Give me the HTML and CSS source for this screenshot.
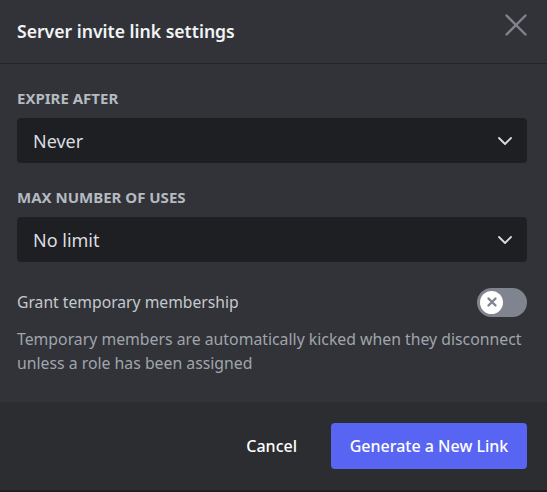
FILE: index.html
```html
<!DOCTYPE html>
<html>
<head>
<meta charset="utf-8">
<link rel="stylesheet" href="styles.css">
</head>
<body>
<div class="modal">
  <header class="modal-header">
    <h1 class="title">Server invite link settings</h1>
    <button class="close" aria-label="Close">
      <svg width="24" height="24" viewBox="0 0 24 24"><path d="M2.5 2.5 L21.5 21.5 M21.5 2.5 L2.5 21.5" stroke="currentColor" stroke-width="2.4" fill="none" stroke-linecap="round"/></svg>
    </button>
  </header>
  <div class="modal-body">
    <div class="field">
      <div class="label">Expire After</div>
      <div class="select">
        <span>Never</span>
        <svg class="chev" width="16" height="16" viewBox="0 0 16 16"><path d="M2 5 L8 11 L14 5" stroke="currentColor" stroke-width="1.8" fill="none" stroke-linecap="round" stroke-linejoin="round"/></svg>
      </div>
    </div>
    <div class="field">
      <div class="label">Max Number of Uses</div>
      <div class="select">
        <span>No limit</span>
        <svg class="chev" width="16" height="16" viewBox="0 0 16 16"><path d="M2 5 L8 11 L14 5" stroke="currentColor" stroke-width="1.8" fill="none" stroke-linecap="round" stroke-linejoin="round"/></svg>
      </div>
    </div>
    <div class="toggle-row">
      <span class="toggle-label">Grant temporary membership</span>
      <div class="toggle">
        <div class="knob">
          <svg width="12" height="12" viewBox="0 0 12 12"><path d="M2.5 2.5 L9.5 9.5 M9.5 2.5 L2.5 9.5" stroke="currentColor" stroke-width="2.4" stroke-linecap="round"/></svg>
        </div>
      </div>
    </div>
    <p class="desc">Temporary members are automatically kicked when they disconnect unless a role has been assigned</p>
  </div>
  <footer class="modal-footer">
    <button class="btn-cancel">Cancel</button>
    <button class="btn-primary">Generate a New Link</button>
  </footer>
</div>
</body>
</html>
```
FILE: styles.css
```css
* { box-sizing: border-box; }
html, body { margin: 0; padding: 0; background: #313338; }
body { font-family: "Noto Sans", "Open Sans", sans-serif; }
.modal {
  width: 547px;
  height: 492px;
  background: #313338;
  display: flex;
  flex-direction: column;
  border-bottom: 2px solid #1e1f22;
}
.modal-header {
  height: 64px;
  flex: none;
  display: flex;
  align-items: center;
  justify-content: space-between;
  padding: 0 17px 2px 17px;
  border-bottom: 1px solid #232428;
}
.title {
  margin: 0;
  font-size: 17.6px;
  font-weight: 600;
  color: #f2f3f5;
}
.close {
  background: none;
  border: 0;
  padding: 0;
  color: #80848e;
  width: 24px;
  height: 24px;
  margin-top: -11px;
  margin-right: 2px;
}
.close svg { display: block; }
.modal-body {
  flex: 1;
  padding: 25px 20px 0 17px;
}
.field { margin-bottom: 25px; }
.label {
  font-size: 15px;
  font-weight: 700;
  text-transform: uppercase;
  color: #b5bac1;
  line-height: 18px;
  margin-bottom: 11px;
}
.select {
  height: 45px;
  background: #1e1f22;
  border-radius: 4px;
  display: flex;
  align-items: center;
  justify-content: space-between;
  padding: 0 14px 0 16px;
  color: #dbdee1;
  font-size: 18px;
}
.chev { color: #dbdee1; display: block; }
.toggle-row {
  display: flex;
  align-items: center;
  justify-content: space-between;
  height: 30px;
  margin-bottom: 10px;
}
.toggle-label {
  font-size: 15.7px;
  color: #c4c9ce;
}
.toggle {
  width: 50px;
  height: 29px;
  border-radius: 15px;
  background: #80848e;
  padding: 3px;
  display: flex;
  align-items: center;
}
.knob {
  width: 23px;
  height: 23px;
  border-radius: 50%;
  background: #ffffff;
  color: #80848e;
  display: flex;
  align-items: center;
  justify-content: center;
}
.desc {
  margin: 0;
  font-size: 15.8px;
  line-height: 24px;
  color: #a0a5ab;
}
.modal-footer {
  height: 88px;
  flex: none;
  background: #2b2d31;
  display: flex;
  align-items: center;
  justify-content: flex-end;
  padding: 0 20px 0 17px;
  gap: 18px;
}
.btn-cancel {
  background: none;
  border: 0;
  color: #ffffff;
  font-family: inherit;
  font-size: 16px;
  font-weight: 500;
  padding: 0 16px;
  height: 46px;
}
.btn-primary {
  background: #5865f2;
  border: 0;
  border-radius: 4px;
  color: #ffffff;
  font-family: inherit;
  font-size: 16px;
  font-weight: 500;
  height: 46px;
  width: 196px;
}
```
